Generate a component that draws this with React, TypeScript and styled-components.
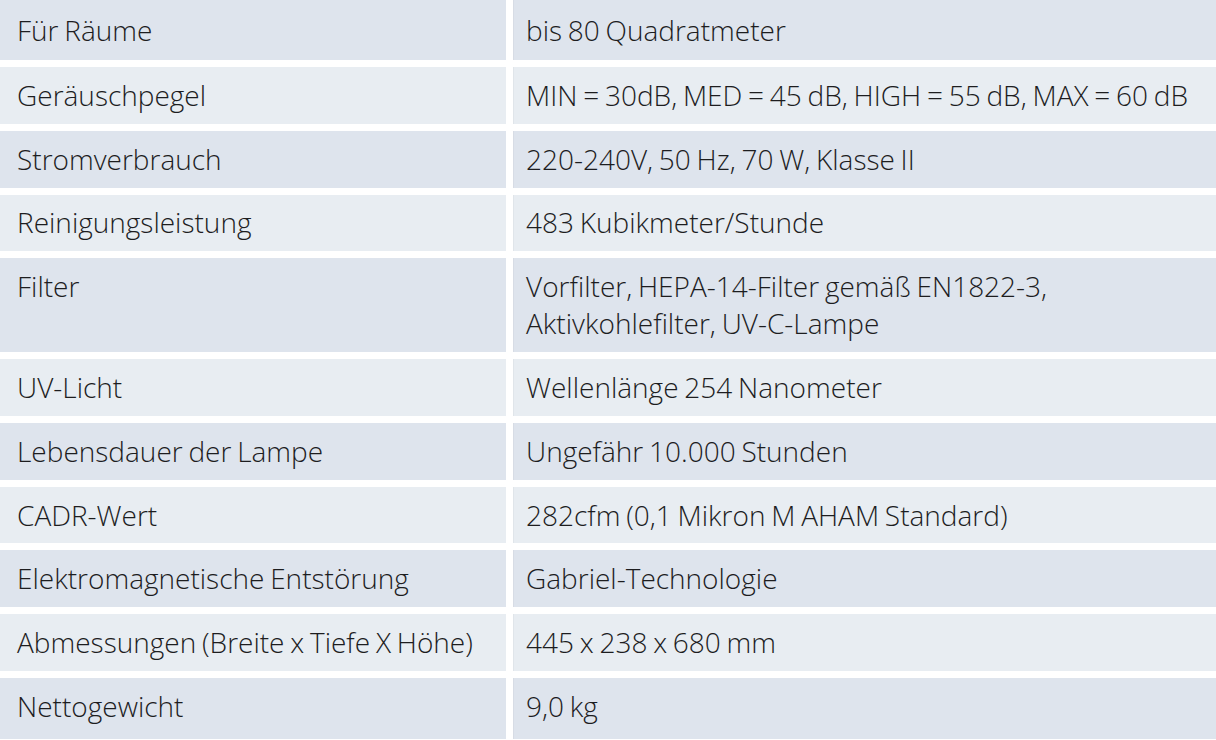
import styled, { createGlobalStyle } from "styled-components"

const GlobalStyle = createGlobalStyle`
  html, body {
    margin: 0;
    padding: 0;
    background: #ffffff;
  }
  body {
    font-family: "Open Sans", "Lato", "Liberation Sans", sans-serif;
    color: #1d1d1f;
  }
`

const specs: [string, string[]][] = [
  ["Für Räume", ["bis 80 Quadratmeter"]],
  ["Geräuschpegel", ["MIN = 30dB, MED = 45 dB, HIGH = 55 dB, MAX = 60 dB"]],
  ["Stromverbrauch", ["220-240V, 50 Hz, 70 W, Klasse II"]],
  ["Reinigungsleistung", ["483 Kubikmeter/Stunde"]],
  ["Filter", ["Vorfilter, HEPA-14-Filter gemäß EN1822-3,", "Aktivkohlefilter, UV-C-Lampe"]],
  ["UV-Licht", ["Wellenlänge 254 Nanometer"]],
  ["Lebensdauer der Lampe", ["Ungefähr 10.000 Stunden"]],
  ["CADR-Wert", ["282cfm (0,1 Mikron M AHAM Standard)"]],
  ["Elektromagnetische Entstörung", ["Gabriel-Technologie"]],
  ["Abmessungen (Breite x Tiefe X Höhe)", ["445 x 238 x 680 mm"]],
  ["Nettogewicht", ["9,0 kg"]],
]

const SpecGrid = styled.main`
  display: grid;
  grid-template-columns: 506px 1fr;
  column-gap: 7px;
  row-gap: 7px;
  width: 1216px;
`

const Cell = styled.div<{ $shade: boolean; $first: boolean; $last: boolean; $value?: boolean }>`
  background: ${(p) => (p.$shade ? "#dee4ed" : "#e8edf2")};
  padding-top: ${(p) => (p.$first ? "11.5px" : "9.9px")};
  padding-bottom: ${(p) => (p.$first ? "11.5px" : p.$last ? "14px" : "9.9px")};
  padding-left: ${(p) => (p.$value ? "13px" : "17px")};
  padding-right: 8px;
  font-size: 28px;
  font-weight: 300;
  font-stretch: 94%;
  word-spacing: -1.5px;
  line-height: 37px;
  white-space: nowrap;
  box-shadow: ${(p) => (p.$value ? "inset 1px 0 0 rgba(0, 0, 0, 0.03)" : "none")};
`

const Line = styled.div``

export default function App() {
  return (
    <>
      <GlobalStyle />
      <SpecGrid>
        {specs.map(([label, value], i) => (
          <>
            <Cell
              key={label + "-l"}
              $shade={i % 2 === 0}
              $first={i === 0}
              $last={i === specs.length - 1}
            >
              {label}
            </Cell>
            <Cell
              key={label + "-v"}
              $shade={i % 2 === 0}
              $first={i === 0}
              $last={i === specs.length - 1}
              $value
            >
              {value.map((v) => (
                <Line key={v}>{v}</Line>
              ))}
            </Cell>
          </>
        ))}
      </SpecGrid>
    </>
  )
}
